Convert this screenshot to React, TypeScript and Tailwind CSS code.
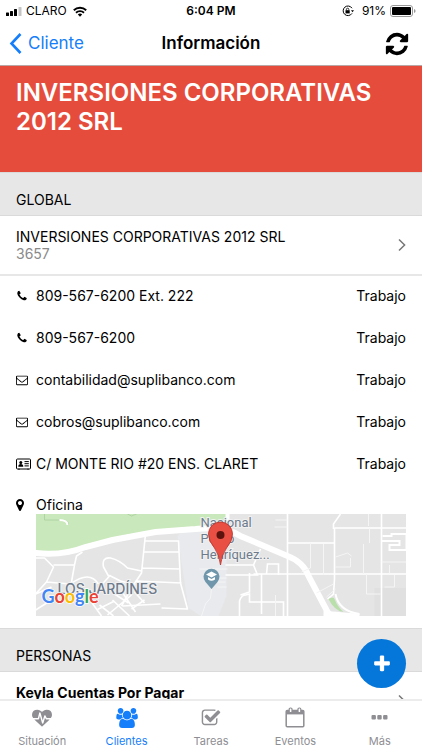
import type { ReactNode } from "react";

type IconProps = { className?: string };

function Glyph({ d, box = "0 0 1792 1792", className }: IconProps & { d: string; box?: string }) {
  return (
    <svg viewBox={box} className={className} fill="currentColor" aria-hidden="true">
      <path d={d} />
    </svg>
  );
}

const PHONE =
  "M1600 1240q0 27-10 70.5t-21 68.5q-21 50-122 106-94 51-186 51-27 0-53-3.5t-57.5-12.5-47-14.5-55.5-20.5-49-18q-98-35-175-83-127-79-264-216t-216-264q-48-77-83-175-3-9-18-49t-20.5-55.5-14.5-47-12.5-57.5-3.5-53q0-92 51-186 56-101 106-122 25-11 68.5-21t70.5-10q14 0 21 3 18 6 53 76 11 19 30 54t35 63.5 31 53.5q3 4 17.5 25t21.5 35.5 7 28.5q0 20-28.5 50t-62 55-62 53-28.5 46q0 9 5 22.5t8.5 20.5 14 24 11.5 19q76 137 174 235t235 174q2 1 19 11.5t24 14 20.5 8.5 22.5 5q18 0 46-28.5t53-62 55-62 50-28.5q14 0 28.5 7t35.5 21.5 25 17.5q25 15 53.5 31t63.5 35 54 30q70 35 76 53 3 7 3 21z";
const REFRESH =
  "M1639 1056q0 5-1 7-64 268-268 434.5t-478 166.5q-146 0-282.5-55t-243.5-157l-129 129q-19 19-45 19t-45-19-19-45v-448q0-26 19-45t45-19h448q26 0 45 19t19 45-19 45l-137 137q71 66 161 102t187 36q134 0 250-65t186-179q11-17 53-117 8-23 30-23h192q13 0 22.5 9.5t9.5 22.5zm25-800v448q0 26-19 45t-45 19h-448q-26 0-45-19t-19-45 19-45l138-138q-148-137-349-137-134 0-250 65t-186 179q-11 17-53 117-8 23-30 23h-199q-13 0-22.5-9.5t-9.5-22.5v-7q65-268 270-434.5t480-166.5q146 0 284 55.5t245 156.5l130-129q19-19 45-19t45 19 19 45z";
const MARKER =
  "M1152 640q0-106-75-181t-181-75-181 75-75 181 75 181 181 75 181-75 75-181zm256 0q0 109-33 179l-364 774q-16 33-47.5 52t-67.5 19-67.5-19-46.5-52l-365-774q-33-70-33-179 0-212 150-362t362-150 362 150 150 362z";
const CHECK_SQUARE =
  "M1472 930v318q0 119-84.5 203.5t-203.5 84.5h-832q-119 0-203.5-84.5t-84.5-203.5v-832q0-119 84.5-203.5t203.5-84.5h832q63 0 117 25 15 7 18 23 3 17-9 29l-49 49q-10 10-23 10-3 0-9-2-23-6-45-6h-832q-66 0-113 47t-47 113v832q0 66 47 113t113 47h832q66 0 113-47t47-113v-254q0-13 9-22l64-64q10-10 23-10 6 0 12 3 20 8 20 29zm231-489l-814 814q-24 24-57 24t-57-24l-430-430q-24-24-24-57t24-57l110-110q24-24 57-24t57 24l263 263 647-647q24-24 57-24t57 24l110 110q24 24 24 57t-24 57z";
const PLUS =
  "M1600 736v192q0 40-28 68t-68 28h-416v416q0 40-28 68t-68 28h-192q-40 0-68-28t-28-68v-416h-416q-40 0-68-28t-28-68v-192q0-40 28-68t68-28h416v-416q0-40 28-68t68-28h192q40 0 68 28t28 68v416h416q40 0 68 28t28 68z";
const ENVELOPE =
  "M1664 1504v-768q-32 36-69 66-268 206-426 338-51 43-83 67t-86.5 48.5-102.5 24.5h-2q-48 0-102.5-24.5t-86.5-48.5-83-67q-158-132-426-338-37-30-69-66v768q0 13 9.5 22.5t22.5 9.5h1472q13 0 22.5-9.5t9.5-22.5zm0-1051v-24.5l-.5-13-3-12.5-5.5-9-9-7.5-14-2.5h-1472q-13 0-22.5 9.5t-9.5 22.5q0 168 147 284 193 152 401 317 6 5 35 29.5t46 37.5 44.5 31.5 50.5 27.5 43 9h2q20 0 43-9t50.5-27.5 44.5-31.5 46-37.5 35-29.5q208-165 401-317 54-43 100.5-115.5t46.5-131.5zm128-37v1088q0 66-47 113t-113 47h-1472q-66 0-113-47t-47-113v-1088q0-66 47-113t113-47h1472q66 0 113 47t47 113z";
const USERS =
  "M593 896q-162 5-265 128h-134q-82 0-138-40.5t-56-118.5q0-353 124-353 6 0 43.5 21t97.5 42.5 119 21.5q67 0 133-23-5 37-5 66 0 159 93 256zm1071 637q0 120-73 189.5t-194 69.5h-874q-121 0-194-69.5t-73-189.5q0-53 3.5-103.5t14-109 26.5-108.5 43-97.5 62-81 85.5-53.5 111.5-20q10 0 43 21.5t73 48 107 48 135 21.5 135-21.5 107-48 73-48 43-21.5q61 0 111.5 20t85.5 53.5 62 81 43 97.5 26.5 108.5 14 109 3.5 103.5zm-1024-1277q0 106-75 181t-181 75-181-75-75-181 75-181 181-75 181 75 75 181zm704 384q0 159-112.5 271.5t-271.5 112.5-271.5-112.5-112.5-271.5 112.5-271.5 271.5-112.5 271.5 112.5 112.5 271.5zm576 225q0 78-56 118.5t-138 40.5h-134q-103-123-265-128 93-97 93-256 0-29-5-66 66 23 133 23 59 0 119-21.5t97.5-42.5 43.5-21q124 0 124 353zm-128-609q0 106-75 181t-181 75-181-75-75-181 75-181 181-75 181 75 75 181z";
const HEARTBEAT =
  "M1280 1024h305q-5 6-10 10.5t-9 7.5l-3 4-623 600q-18 18-44 18t-44-18l-624-602q-5-2-21-20h369q22 0 39.5-13.5t22.5-34.5l70-281 190 667q6 20 23 33t39 13q21 0 38-13t23-33l146-485 56 112q18 35 57 35zm512-403q0 145-103 275h-369l-111-221q-8-17-25.5-27t-36.5-8q-45 5-56 46l-129 430-196-686q-6-20-23.5-33t-39.5-13-39 13.5-22 34.5l-116 464h-423q-103-130-103-275 0-220 127-344t351-124q62 0 126.5 21.5t120 58 95.5 68.5 76 68q36-36 76-68t95.5-68.5 120-58 126.5-21.5q224 0 351 124t127 344z";

function CalendarIcon({ className }: IconProps) {
  return (
    <svg viewBox="0 0 20 21" className={className} fill="none" stroke="currentColor" aria-hidden="true">
      <rect x="1.2" y="3.6" width="17.6" height="16.2" rx="1" strokeWidth="1.5" />
      <path d="M1 3.4h18v4H1z" fill="currentColor" stroke="none" />
      <rect x="4.2" y="1" width="2.8" height="4.6" rx="1.2" fill="#fff" strokeWidth="1.2" />
      <rect x="13" y="1" width="2.8" height="4.6" rx="1.2" fill="#fff" strokeWidth="1.2" />
    </svg>
  );
}

function DotsIcon({ className }: IconProps) {
  return (
    <svg viewBox="0 0 17 17" className={className} fill="currentColor" aria-hidden="true">
      <rect x="0.5" y="6" width="4.4" height="4.6" rx="1" />
      <rect x="6.3" y="6" width="4.4" height="4.6" rx="1" />
      <rect x="12.1" y="6" width="4.4" height="4.6" rx="1" />
    </svg>
  );
}

function CardIcon({ className }: IconProps) {
  return (
    <svg viewBox="0 0 15 12" className={className} fill="none" stroke="currentColor" aria-hidden="true">
      <rect x="0.5" y="1" width="14" height="10" rx="1" />
      <circle cx="4.8" cy="4.4" r="1.5" fill="currentColor" stroke="none" />
      <path d="M2.3 8.8c0-2 .8-2.8 2.5-2.8s2.5.8 2.5 2.8z" fill="currentColor" stroke="none" />
      <path d="M8.5 3.6h4.3M8.5 5.7h4.3M8.5 7.9h4.3M3 10.6v1.2M12 10.6v1.2" />
    </svg>
  );
}

function Chevron({ className }: IconProps) {
  return (
    <svg viewBox="0 0 8 14" className={className} fill="none" stroke="currentColor" strokeWidth="1.5" aria-hidden="true">
      <path d="M1 1.5 6.6 7 1 12.5" />
    </svg>
  );
}

function StatusBar() {
  return (
    <div className="grid h-[22px] grid-cols-3 items-center px-1.5 text-xs">
      <div className="flex items-center gap-1">
        <svg viewBox="0 0 16 9" className="h-[9px] w-4" aria-hidden="true">
          <rect x="0" y="5.5" width="3" height="3.5" rx=".6" />
          <rect x="4" y="4" width="3" height="5" rx=".6" />
          <rect x="8" y="2" width="3" height="7" rx=".6" />
          <rect x="12.5" y="0" width="3" height="9" rx=".6" fill="#c4c4c4" />
        </svg>
        <span>CLARO</span>
        <svg viewBox="0 0 14 11" className="ml-0.5 h-[11px] w-3.5" fill="none" stroke="#000" strokeWidth="1.9" aria-hidden="true">
          <path d="M.8 4.2a9 9 0 0 1 12.4 0M3 6.7a5.8 5.8 0 0 1 8 0" />
          <path d="M7 10.8 4.8 8.5a3.2 3.2 0 0 1 4.4 0z" fill="#000" stroke="none" />
        </svg>
      </div>
      <div className="text-center font-semibold">6:04 PM</div>
      <div className="flex items-center justify-end">
        <svg viewBox="0 0 12 12" className="mr-2 h-3 w-3" fill="none" stroke="#000" aria-hidden="true">
          <path d="M10 3.2A4.8 4.8 0 1 0 10 8.4" />
          <path d="M9 5.3h3l-1.5 2z" fill="#000" stroke="none" />
          <rect x="3.5" y="5.2" width="4.2" height="3.2" fill="#000" stroke="none" />
          <path d="M4.4 5.2V4.4a1.2 1.2 0 0 1 2.4 0v.8" strokeWidth=".8" />
        </svg>
        <span className="mr-1">91%</span>
        <svg viewBox="0 0 26 12" className="h-3 w-[26px]" aria-hidden="true">
          <rect x=".5" y=".5" width="22" height="11" rx="2.5" fill="none" stroke="#999" />
          <rect x="2" y="2" width="19" height="8" rx="1" />
          <path d="M24 4v4q1.6-.6 1.6-2T24 4z" fill="#999" />
        </svg>
      </div>
    </div>
  );
}

function SectionHeader({ children }: { children: ReactNode }) {
  return (
    <h2 className="flex h-11 items-center border-y border-[#dadada] bg-[#e7e7e7] px-4 pt-3 text-sm">{children}</h2>
  );
}

const contacts = [
  { icon: <Glyph d={PHONE} className="h-3 w-3" />, value: "809-567-6200 Ext. 222", href: "tel:8095676200" },
  { icon: <Glyph d={PHONE} className="h-3 w-3" />, value: "809-567-6200", href: "tel:8095676200" },
  { icon: <Glyph d={ENVELOPE} className="h-3 w-3" />, value: "contabilidad@suplibanco.com", href: "mailto:contabilidad@suplibanco.com" },
  { icon: <Glyph d={ENVELOPE} className="h-3 w-3" />, value: "cobros@suplibanco.com", href: "mailto:cobros@suplibanco.com" },
  { icon: <CardIcon className="h-3 w-[15px]" />, value: "C/ MONTE RIO #20 ENS. CLARET", href: "#direccion" },
];

function MapView() {
  return (
    <svg viewBox="0 0 371 102" preserveAspectRatio="xMidYMid slice" className="ml-5 block h-[102px] w-[calc(100%-20px)]" role="img" aria-label="Mapa de la oficina">
      <rect width="371" height="102" fill="#e5e5e5" />
      <path d="M142 22 153 94 165 102h18l8-20V17L150 14z" fill="#e8eaed" />
      <path d="M339 74h32v28h-32z" fill="#e0e0e0" />
      <path d="M0 0h192l-3 8-26 6-48 6L50 33Q20 40 0 36z" fill="#c9e8bb" />
      <path d="M9 0v6h17M27 6q6 0 6 5M92 0l4 2 5-2" fill="none" stroke="#a9cfa0" strokeWidth=".8" />
      <path d="M24 6q8 0 8 5" fill="none" stroke="#fff" strokeWidth="2" />
      <g fill="none" stroke="#fff" strokeWidth="1.6" strokeLinejoin="round">
        <path d="M0 44h9l9 9-7 15-11 12M18 51h21l2-9 6-4M39 51l-3 17M11 68l24 2q19-14 28 0M0 80l16-7M16 86l-16 10" />
        <path d="M110 20l-4 39-10 15-10 18M108 38h35M106 54l39 1M100 67l46 2M110 27h33l2 42 7 26-26-1M87 92l38-2" />
        <path d="M73 62l-5-9q-2-10 7-9 9 2 17 10l14 3M75 61l-10 11-12 12M75 62l10 5 15 4M53 84l13 18M61 96l18-9M79 80l14 9M64 91l14 11M77 86l17 16M88 80l12 18M99 78l10 11M96 95l13-9M72 101l24-20" />
      </g>
      <path d="M0 39Q27 42 50 33L77 26 120 18 160 15Q190 12 205 22L252 42Q268 48 273 62L291 96 296 104" fill="none" stroke="#fff" strokeWidth="6" />
      <path d="M192 0v14" stroke="#fff" strokeWidth="4" />
      <g fill="none" stroke="#fff" strokeWidth="1.6">
        <path d="M252 0v102M299 14v51l-1 15-6 5M346 0v102M252 29h47M299 14h72M305 0l-7 10v5M218 60h153M190 51h28l7-16M218 51l4 10h-32M204 102v-15q2-6 6-6l4-1v8h34v14M226 60v40M205 81l9-3v-19M231 60l1-10h11v11" />
      </g>
      <g fill="none" stroke="#f5f5f5" strokeWidth="1">
        <path d="M240 6h12M239 13h13M333 0v12M334 14v15M328 30v30M275 29v25l-9 4M288 30v31M300 43l12-4 4 3M300 53h15v-9M346 48h25M354 51v8M359 61v12h-10M331 60v20h14M281 79l17-9M291 83l9-8M240 81v21M164 55h28M178 54v8M180 64h11M182 73h9M176 75l-1 9-5 6-4 12M180 68h10" />
        <path d="M347 22h9v-2h15v16h-17v-5h10v-4h-18" strokeWidth="2" stroke="#fff" />
        <path d="M300 80q3 17 24 20" strokeWidth="2" stroke="#fff" />
      </g>
      <path d="M288 97q8 0 36 3v2h-36z" fill="#fff" />
      <path d="M293 85q5-3 6 0 3 8 9 13-9-1-15-13z" fill="#b9dfaa" />
      <g fontFamily="Roboto, sans-serif" fill="#6d7b8c" stroke="#f1f1f1" strokeWidth="2" paintOrder="stroke">
        <text x="165" y="13" fontSize="13">Nacional</text>
        <text x="165" y="29" fontSize="13">Pedro</text>
        <text x="165" y="45" fontSize="13">Henríquez...</text>
        <text x="22" y="80" fontSize="14" fontFamily="Inter, sans-serif" fontWeight="500">LOS JARDÍNES</text>
      </g>
      <path d="M176 75l-6-7a8 8 0 1 1 12 0z" fill="#6f96ab" />
      <path d="M176 57.5l5.5 3-5.5 3-5.5-3zM172.500 63v2.500q3.500 2.500 7 0V63l-3.500 2z" fill="#fff" />
      <path d="M185 51q-1-10-6-17-6-7-6-14a12 12 0 0 1 24 0q0 7-6 14-5 7-6 17z" fill="#ea4f43" stroke="#b93229" strokeWidth=".8" />
      <circle cx="185" cy="21" r="4" fill="#5c130e" />
      <text x="6" y="89" fontSize="18" fontFamily="Lato, sans-serif" fontWeight="700" stroke="#fff" strokeWidth="1.5" paintOrder="stroke">
        <tspan fill="#4285f4">G</tspan>
        <tspan fill="#ea4335">o</tspan>
        <tspan fill="#fbbc05">o</tspan>
        <tspan fill="#4285f4">g</tspan>
        <tspan fill="#34a853">l</tspan>
        <tspan fill="#ea4335">e</tspan>
      </text>
    </svg>
  );
}

const tabs = [
  { label: "Situación", icon: <Glyph d={HEARTBEAT} className="h-5 w-5" />, active: false },
  { label: "Clientes", icon: <Glyph d={USERS} box="0 0 1920 1792" className="h-5 w-[22px]" />, active: true },
  { label: "Tareas", icon: <Glyph d={CHECK_SQUARE} className="h-5 w-5" />, active: false },
  { label: "Eventos", icon: <CalendarIcon className="h-[21px] w-5" />, active: false },
  { label: "Más", icon: <DotsIcon className="h-[17px] w-[17px]" />, active: false },
];

export default function App() {
  return (
    <div className="relative flex h-screen flex-col bg-white font-['Inter',sans-serif] text-black">
      <StatusBar />
      <header className="grid h-11 shrink-0 grid-cols-3 items-center border-b border-[#b8a7a4] px-2">
        <button type="button" className="flex items-center gap-1.5 text-[17px] text-[#157efb]">
          <svg viewBox="0 0 13 21" className="ml-px h-[21px] w-[13px]" fill="none" stroke="currentColor" strokeWidth="2.6" aria-hidden="true">
            <path d="M11.500 1 2.500 10.500l9 9.500" />
          </svg>
          Cliente
        </button>
        <h1 className="text-center text-[17px] font-semibold">Información</h1>
        <button type="button" aria-label="Actualizar" className="mr-1 justify-self-end">
          <Glyph d={REFRESH} className="h-[26px] w-[26px]" />
        </button>
      </header>

      <main className="min-h-0 flex-1 overflow-y-auto [scrollbar-width:none]">
        <div className="min-h-[106px] bg-[#e64c3c] px-4 pt-3 pb-9 text-2xl leading-[29px] font-semibold text-white">
          INVERSIONES CORPORATIVAS 2012 SRL
        </div>
        <SectionHeader>GLOBAL</SectionHeader>
        <button type="button" className="flex w-full items-center justify-between border-b-2 border-[#e7e7e7] px-4 pt-3 pb-3 text-left text-sm leading-[17px]">
          <span>
            <span className="block">INVERSIONES CORPORATIVAS 2012 SRL</span>
            <span className="block text-[#8a8a8a]">3657</span>
          </span>
          <Chevron className="h-3.5 w-2 text-[#777]" />
        </button>
        <ul className="text-sm">
          {contacts.map((c) => (
            <li key={c.value} className="flex h-[42px] items-center px-4 pb-0.5">
              <span className="w-5">{c.icon}</span>
              <a href={c.href} className="flex-1">{c.value}</a>
              <span>Trabajo</span>
            </li>
          ))}
          <li className="px-4 pt-2.5 pb-3">
            <div className="flex h-[18px] items-center">
              <span className="w-5">
                <Glyph d={MARKER} box="384 0 1024 1792" className="h-3.5 w-2" />
              </span>
              <span>Oficina</span>
            </div>
            <MapView />
          </li>
        </ul>
        <SectionHeader>PERSONAS</SectionHeader>
        <button type="button" className="flex w-full items-center justify-between px-4 py-3 text-left text-sm leading-[17px]">
          <span>
            <span className="block font-bold">Keyla Cuentas Por Pagar</span>
            <span className="block text-[#8a8a8a]">Trabajo</span>
          </span>
          <Chevron className="h-3.5 w-2 text-[#777]" />
        </button>
      </main>

      <button type="button" aria-label="Agregar" className="absolute right-4 bottom-[62px] flex h-[49px] w-[49px] items-center justify-center rounded-full bg-[#0576da] text-white">
        <Glyph d={PLUS} className="h-5 w-5" />
      </button>

      <nav className="grid h-[51px] shrink-0 grid-cols-5 border-t-2 border-[#ececec] bg-white">
        {tabs.map((t) => (
          <a
            key={t.label}
            href={`#${t.label}`}
            aria-current={t.active ? "page" : undefined}
            className={t.active ? "flex flex-col items-center text-[11px] text-[#157efb]" : "flex flex-col items-center text-[11px] text-[#8e8e93]"}
          >
            <span className="flex h-[33px] items-center">{t.icon}</span>
            <span className="leading-[14px]">{t.label}</span>
          </a>
        ))}
      </nav>
    </div>
  );
}
